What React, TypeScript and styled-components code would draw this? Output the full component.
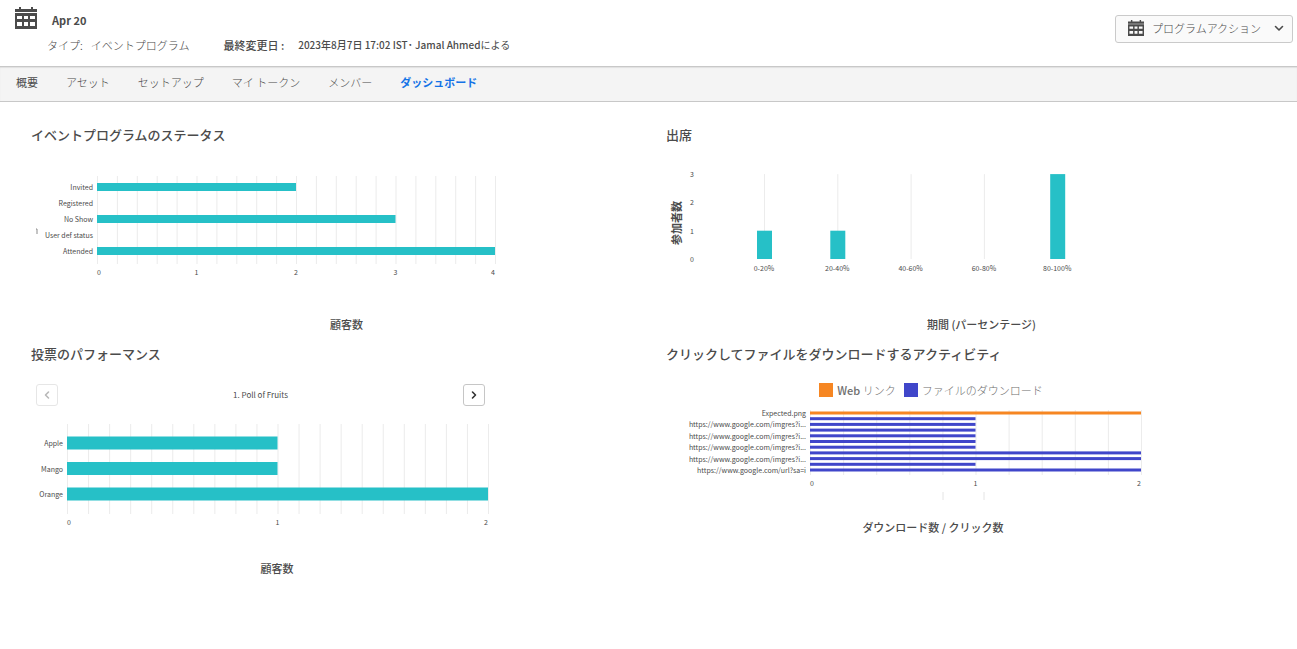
import React from 'react';
import styled, { createGlobalStyle } from 'styled-components';

const GlobalStyle = createGlobalStyle`
  * { box-sizing: border-box; }
  body {
    margin: 0;
    background: #fff;
    color: #4b4b4b;
    font: 11px/16px "Noto Sans CJK JP", sans-serif;
  }
`;

const TEAL = '#26c0c7';
const INDIGO = '#4046ca';
const ORANGE = '#f68622';

const Header = styled.header`
  display: flex;
  justify-content: space-between;
  align-items: flex-start;
  min-height: 66px;
  padding: 7px 4px 0 15px;
`;

const TitleRow = styled.div`
  display: flex;
  gap: 15px;
  height: 24px;
`;

const ProgramName = styled.h1`
  margin: 5px 0 0;
  font-size: 11px;
  line-height: 16px;
  font-weight: 700;
`;

const Meta = styled.dl`
  display: flex;
  gap: 34px;
  margin: 6px 0 0;
  padding-left: 32px;
`;

const MetaItem = styled.div<{ $gap: number; $strong?: boolean }>`
  display: flex;
  gap: ${(p) => p.$gap}px;
  font-weight: ${(p) => (p.$strong ? 500 : 300)};

  dd {
    margin: 0;
    font-size: ${(p) => (p.$strong ? 10 : 11)}px;
  }
  span { font-weight: 400; }
`;

const ActionButton = styled.button`
  display: flex;
  align-items: center;
  height: 28px;
  width: 178px;
  margin-top: 8px;
  padding: 0 8px 2px 12px;
  border: 1px solid #cacaca;
  border-radius: 3px;
  background: #fafafa;
  color: #4b4b4b;
  font: inherit;
  font-weight: 300;

  span { margin: 0 auto 0 8px; }
`;

const Tabs = styled.nav`
  display: flex;
  align-items: center;
  gap: 28px;
  height: 36px;
  padding: 0 16px 4px;
  border-top: 1px solid #c8c8c8;
  border-bottom: 1px solid #c8c8c8;
  background: #f4f4f4;
  box-shadow: inset 0 1px 1px #e0e0e0;
`;

const Tab = styled.a<{ $weight: number; $active?: boolean }>`
  color: ${(p) => (p.$active ? '#1473e6' : '#4b4b4b')};
  font-weight: ${(p) => p.$weight};
  text-decoration: none;
`;

const Dashboard = styled.main`
  display: grid;
  grid-template-columns: repeat(2, minmax(0, 1fr));
  gap: 12px 4px;
  padding: 23px 0 0 31px;
`;

const Panel = styled.section<{ $width?: number }>`
  display: flex;
  flex-direction: column;
  max-width: ${(p) => (p.$width ? `${p.$width}px` : 'none')};
`;

const PanelTitle = styled.h2`
  margin: 0 0 20px;
  font-size: 13px;
  line-height: 20px;
  font-weight: 500;
  white-space: nowrap;
`;

const Caption = styled.p<{ $top: number }>`
  margin: ${(p) => p.$top}px 0 0;
  text-align: center;
  font-weight: 500;
`;

const Chart = styled.svg`
  display: block;
  flex: none;
  overflow: visible;

  text {
    font-size: 7px;
    fill: #4b4b4b;
    dominant-baseline: central;
  }
  .axis {
    font-size: 11px;
    font-weight: 700;
  }
`;

const Pager = styled.div`
  display: flex;
  align-items: center;
  justify-content: space-between;
  width: 449px;
  margin-left: 5px;
  font-size: 8px;
`;

const PageButton = styled.button`
  display: flex;
  align-items: center;
  justify-content: center;
  width: 22px;
  height: 22px;
  padding: 0;
  border: 1px solid #c6c6c6;
  border-radius: 3px;
  background: #fff;
  color: #323232;

  &:disabled {
    border-color: #e6e6e6;
    color: #b8b8b8;
  }
`;

const Legend = styled.ul`
  display: flex;
  justify-content: center;
  gap: 8px;
  height: 18px;
  margin: -2px 0 0;
  padding: 0 4px 0 0;
  list-style: none;
  color: #6e6e6e;
  font-weight: 300;

  b { font-weight: 500; }
`;

const LegendItem = styled.li<{ $color: string }>`
  display: flex;
  align-items: center;
  gap: 4px;
  height: 16px;

  &::before {
    content: '';
    width: 14px;
    height: 14px;
    background: ${(p) => p.$color};
  }
`;

function CalendarIcon({ size }: { size: number }) {
  return (
    <svg width={size} height={size} viewBox="0 0 22 22" fill="#4b4b4b" aria-hidden="true">
      <path d="M4 0h2v2h10V0h2v2h4v3H0V2h4z" />
      <path
        fillRule="evenodd"
        d="M0 6h22v16H0zM2 9v3h5V9zM9 9v3h4V9zM15 9v3h5V9zM2 15v4h5v-4zM9 15v4h4v-4zM15 15v4h5v-4z"
      />
    </svg>
  );
}

function Chevron({ d }: { d: string }) {
  return (
    <svg width="10" height="10" viewBox="0 0 10 10" fill="none" stroke="currentColor" strokeWidth="1.6" strokeLinecap="round" strokeLinejoin="round" aria-hidden="true">
      <path d={d} />
    </svg>
  );
}

type Bar = { label: string; value: number; color?: string };

type BarChartProps = {
  title: string;
  width: number;
  height: number;
  left: number;
  right: number;
  top: number;
  bottom: number;
  first: number;
  step: number;
  thickness: number;
  max: number;
  divisions: number;
  bars: Bar[];
  children?: React.ReactNode;
};

function BarChart(p: BarChartProps) {
  const span = p.right - p.left;
  const ticks = Array.from({ length: p.max + 1 }, (_, i) => i);
  const anchor = (i: number) => (i === 0 ? 'start' : i === p.max ? 'end' : 'middle');
  return (
    <Chart width={p.width} height={p.height} role="img" aria-label={p.title}>
      {Array.from({ length: p.divisions + 1 }, (_, i) => (
        <rect key={i} x={p.left + (span * i) / p.divisions} y={p.top} width="1" height={p.bottom - p.top} fill="#ececec" />
      ))}
      {p.bars.map((b, i) => (
        <g key={i}>
          <rect
            x={p.left}
            y={p.first + i * p.step - p.thickness / 2}
            width={(span * b.value) / p.max}
            height={p.thickness}
            fill={b.color ?? TEAL}
          />
          <text x={p.left - 4} y={p.first + i * p.step} textAnchor="end">{b.label}</text>
        </g>
      ))}
      {ticks.map((t) => (
        <text key={t} x={p.left + (span * t) / p.max} y={p.bottom + 8} textAnchor={anchor(t)}>{t}</text>
      ))}
      {p.children}
    </Chart>
  );
}

const attendance = [
  { label: '0-20%', value: 1 },
  { label: '20-40%', value: 1 },
  { label: '40-60%', value: 0 },
  { label: '60-80%', value: 0 },
  { label: '80-100%', value: 3 },
];

function AttendanceChart() {
  const base = 94;
  const unit = 28.3;
  return (
    <Chart width="470" height="120" role="img" aria-label="出席">
      <text className="axis" textAnchor="middle" transform="translate(10 58) rotate(-90)">参加者数</text>
      {[0, 1, 2, 3].map((t) => (
        <text key={t} x="28" y={base - t * unit} textAnchor="end">{t}</text>
      ))}
      {attendance.map((a, i) => {
        const x = 98 + i * 73.3;
        return (
          <g key={a.label}>
            <rect x={x} y={base - 3 * unit} width="1" height={3 * unit} fill="#ececec" />
            <rect x={x - 7} y={base - a.value * unit} width="15" height={a.value * unit} fill={TEAL} />
            <text x={x} y={base + 9} textAnchor="middle">{a.label}</text>
          </g>
        );
      })}
    </Chart>
  );
}

const statuses: Bar[] = [
  { label: 'Invited', value: 2 },
  { label: 'Registered', value: 0 },
  { label: 'No Show', value: 3 },
  { label: 'User def status', value: 0 },
  { label: 'Attended', value: 4 },
];

const poll: Bar[] = [
  { label: 'Apple', value: 1 },
  { label: 'Mango', value: 1 },
  { label: 'Orange', value: 2 },
];

const image = 'https://www.google.com/imgres?i...';
const downloads: Bar[] = [
  { label: 'Expected.png', value: 2, color: ORANGE },
  { label: '', value: 1, color: INDIGO },
  { label: image, value: 1, color: INDIGO },
  { label: '', value: 1, color: INDIGO },
  { label: image, value: 1, color: INDIGO },
  { label: '', value: 1, color: INDIGO },
  { label: image, value: 1, color: INDIGO },
  { label: '', value: 2, color: INDIGO },
  { label: image, value: 2, color: INDIGO },
  { label: '', value: 1, color: INDIGO },
  { label: 'https://www.google.com/url?sa=i', value: 2, color: INDIGO },
];

export default function App() {
  return (
    <>
      <GlobalStyle />
      <Header>
        <div>
          <TitleRow>
            <CalendarIcon size={22} />
            <ProgramName>Apr 20</ProgramName>
          </TitleRow>
          <Meta>
            <MetaItem $gap={8}>
              <dt>タイプ:</dt>
              <dd>イベントプログラム</dd>
            </MetaItem>
            <MetaItem $gap={14} $strong>
              <dt>最終変更日 :</dt>
              <dd>2023年8月7日 17:02 IST˙ Jamal Ahmed<span>による</span></dd>
            </MetaItem>
          </Meta>
        </div>
        <ActionButton type="button">
          <CalendarIcon size={16} />
          <span>プログラムアクション</span>
          <Chevron d="M1.5 3.5 5 7l3.5-3.5" />
        </ActionButton>
      </Header>
      <Tabs>
        <Tab href="#overview" $weight={400}>概要</Tab>
        <Tab href="#assets" $weight={300}>アセット</Tab>
        <Tab href="#setup" $weight={300}>セットアップ</Tab>
        <Tab href="#tokens" $weight={300}>マイ トークン</Tab>
        <Tab href="#members" $weight={300}>メンバー</Tab>
        <Tab href="#dashboard" $weight={700} $active aria-current="page">ダッシュボード</Tab>
      </Tabs>
      <Dashboard>
        <Panel>
          <PanelTitle>イベントプログラムのステータス</PanelTitle>
          <BarChart
            title="イベントプログラムのステータス"
            width={470} height={120} left={66} right={464} top={11} bottom={99}
            first={22} step={16} thickness={8} max={4} divisions={20} bars={statuses}
          >
            <path d="M5 64h1v5" fill="none" stroke="#8a8a8a" />
          </BarChart>
          <Caption $top={31}>顧客数</Caption>
        </Panel>
        <Panel>
          <PanelTitle>出席</PanelTitle>
          <AttendanceChart />
          <Caption $top={31}>期間 (パーセンテージ)</Caption>
        </Panel>
        <Panel $width={492}>
          <PanelTitle>投票のパフォーマンス</PanelTitle>
          <Pager>
            <PageButton type="button" disabled aria-label="前へ">
              <Chevron d="M6.5 2 3.5 5l3 3" />
            </PageButton>
            <span>1. Poll of Fruits</span>
            <PageButton type="button" aria-label="次へ">
              <Chevron d="M3.5 2l3 3-3 3" />
            </PageButton>
          </Pager>
          <BarChart
            title="投票のパフォーマンス"
            width={470} height={124} left={36} right={457} top={18} bottom={108}
            first={37} step={25.5} thickness={13} max={2} divisions={20} bars={poll}
          />
          <Caption $top={30}>顧客数</Caption>
        </Panel>
        <Panel $width={534}>
          <PanelTitle>クリックしてファイルをダウンロードするアクティビティ</PanelTitle>
          <Legend>
            <LegendItem $color={ORANGE}><span><b>Web</b> リンク</span></LegendItem>
            <LegendItem $color={INDIGO}>ファイルのダウンロード</LegendItem>
          </Legend>
          <BarChart
            title="クリックしてファイルをダウンロードするアクティビティ"
            width={480} height={105} left={144} right={475} top={10} bottom={75}
            first={13} step={5.7} thickness={3} max={2} divisions={10} bars={downloads}
          >
            <path d="M277 92v8M318 92v8M379 180h9" stroke="#e4e4e4" />
          </BarChart>
          <Caption $top={14}>ダウンロード数 / クリック数</Caption>
        </Panel>
      </Dashboard>
    </>
  );
}
